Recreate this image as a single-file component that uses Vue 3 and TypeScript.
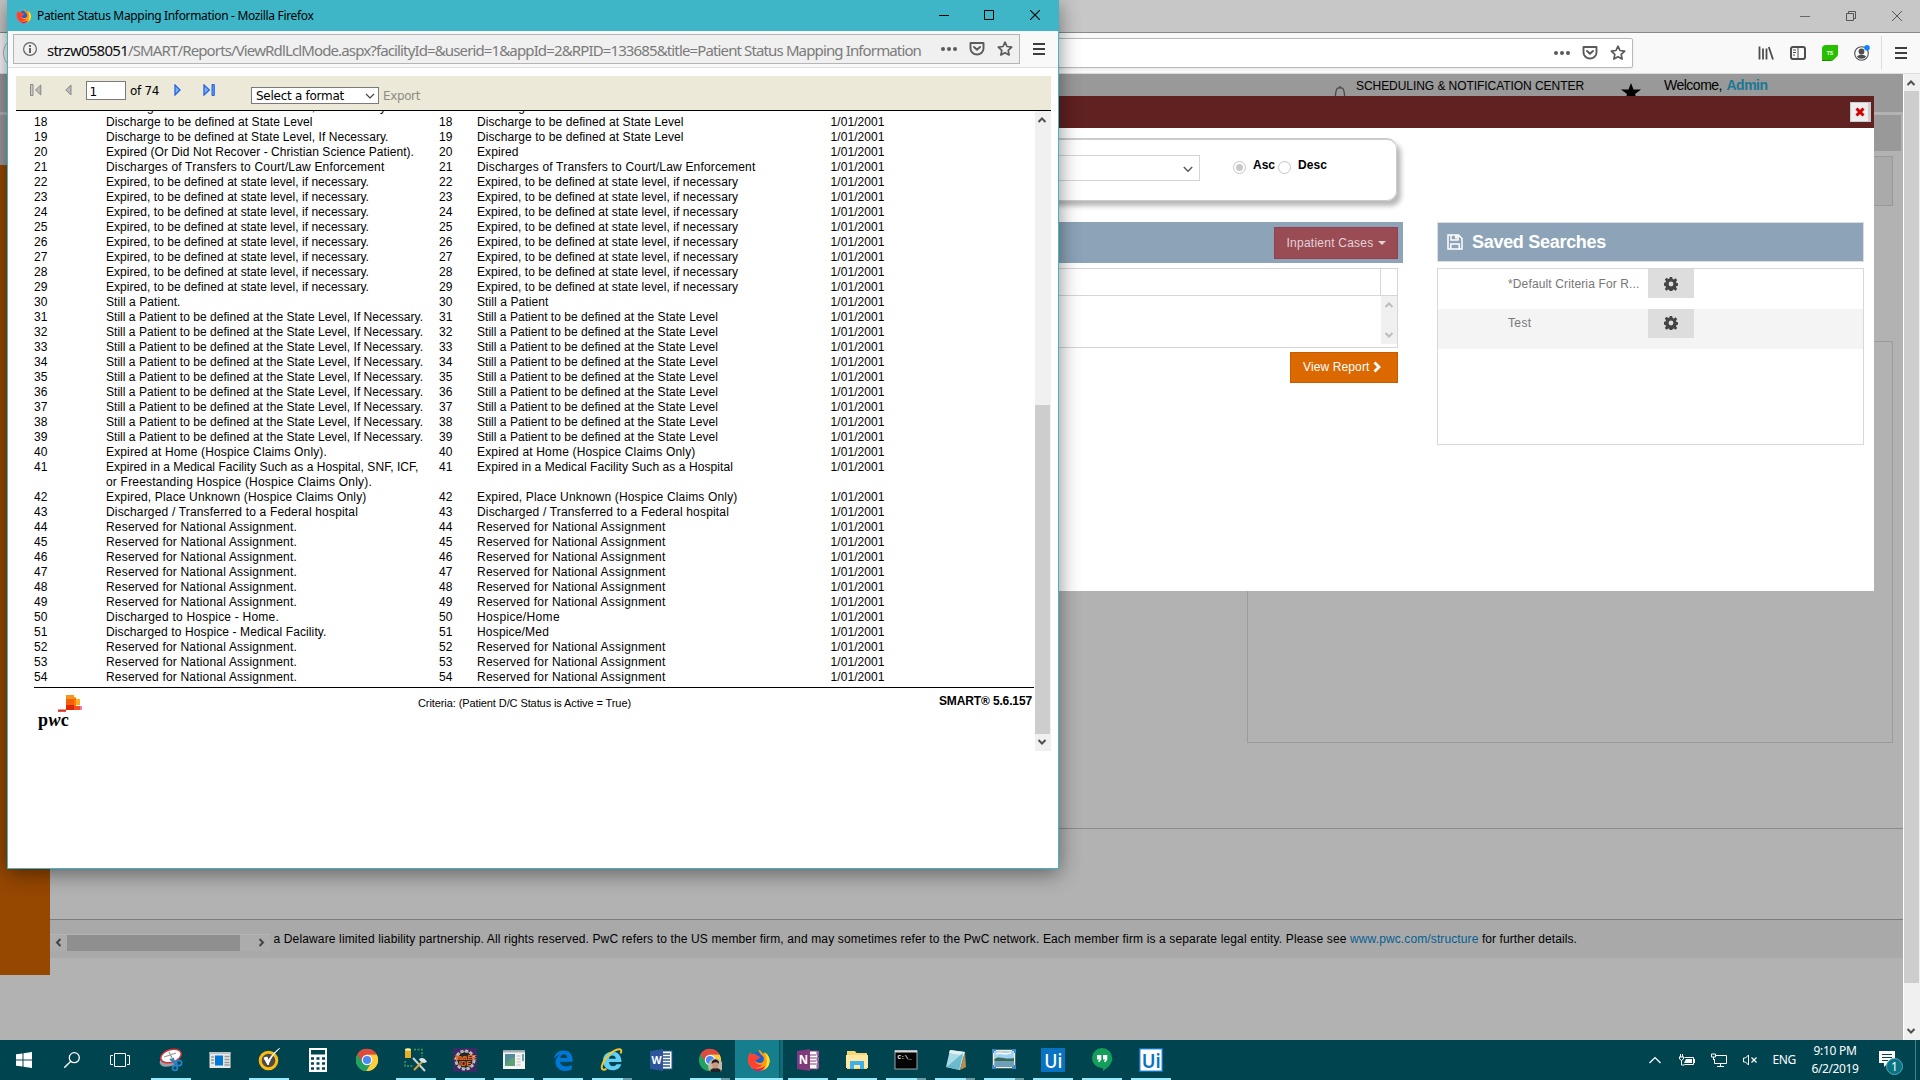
<script setup lang="ts">
interface Row {
  code: string
  left: [string, number][]
  right: [string, number]
}

interface Task {
  name: string
  open?: boolean
  stacked?: boolean
  active?: boolean
  svg: string
}

// Spreads a label's letters so that it fills the given width in pixels.
const vFit = {
  mounted(el: HTMLElement, binding: { value: number }) {
    const natural = el.getBoundingClientRect().width
    const count = (el.textContent ?? '').length
    el.style.letterSpacing = `${(binding.value - natural) / count}px`
  },
}

const dischargeNec: [string, number] = ['Discharge to be defined at State Level, If Necessary.', 282.5]
const discharge: [string, number] = ['Discharge to be defined at State Level', 206.5]
const reservedDot: [string, number] = ['Reserved for National Assignment.', 191]
const reserved: [string, number] = ['Reserved for National Assignment', 188.5]

const rows: Row[] = [
  { code: '17', left: [dischargeNec], right: discharge },
  { code: '18', left: [discharge], right: discharge },
  { code: '19', left: [dischargeNec], right: discharge },
  { code: '20', left: [['Expired (Or Did Not Recover - Christian Science Patient).', 308]], right: ['Expired', 41.5] },
  {
    code: '21',
    left: [['Discharges of Transfers to Court/Law Enforcement', 278.5]],
    right: ['Discharges of Transfers to Court/Law Enforcement', 278.5],
  },
]
for (let n = 22; n <= 29; n++) {
  rows.push({
    code: String(n),
    left: [['Expired, to be defined at state level, if necessary.', 263]],
    right: ['Expired, to be defined at state level, if necessary', 261],
  })
}
rows.push({ code: '30', left: [['Still a Patient.', 74.5]], right: ['Still a Patient', 71.5] })
for (let n = 31; n <= 39; n++) {
  rows.push({
    code: String(n),
    left: [['Still a Patient to be defined at the State Level, If Necessary.', 317]],
    right: ['Still a Patient to be defined at the State Level', 241],
  })
}
rows.push(
  {
    code: '40',
    left: [['Expired at Home (Hospice Claims Only).', 221]],
    right: ['Expired at Home (Hospice Claims Only)', 218.5],
  },
  {
    code: '41',
    left: [
      ['Expired in a Medical Facility Such as a Hospital, SNF, ICF,', 312.5],
      ['or Freestanding Hospice (Hospice Claims Only).', 266],
    ],
    right: ['Expired in a Medical Facility Such as a Hospital', 256],
  },
  {
    code: '42',
    left: [['Expired, Place Unknown (Hospice Claims Only)', 260.5]],
    right: ['Expired, Place Unknown (Hospice Claims Only)', 260.5],
  },
  {
    code: '43',
    left: [['Discharged / Transferred to a Federal hospital', 252]],
    right: ['Discharged / Transferred to a Federal hospital', 252],
  },
)
for (let n = 44; n <= 49; n++) rows.push({ code: String(n), left: [reservedDot], right: reserved })
rows.push(
  { code: '50', left: [['Discharged to Hospice - Home.', 173]], right: ['Hospice/Home', 83] },
  { code: '51', left: [['Discharged to Hospice - Medical Facility.', 220.5]], right: ['Hospice/Med', 72] },
)
for (let n = 52; n <= 54; n++) rows.push({ code: String(n), left: [reservedDot], right: reserved })

const gear = 'M5.8 0h2.4l.4 2 1.2.5L11.500 1.300l1.700 1.700-1.200 1.700.5 1.200 2 .4v2.400l-2 .4-.5 1.200 1.200 1.700-1.700 1.700-1.700-1.200-1.200.5-.4 2H5.800l-.4-2-1.200-.5-1.700 1.200-1.700-1.700 1.200-1.700-.5-1.200-2-.4V5.800l2-.4.5-1.200L.800 2.500 2.500.800l1.700 1.200 1.200-.5zM7 4.600a2.400 2.400 0 1 0 0 4.800 2.400 2.400 0 0 0 0-4.800z'

const chromeShape = (r: number) => `
  <circle cx="12" cy="12" r="${r}" fill="#fc3"/>
  <path d="M12 12L2.300 6.600A11 11 0 0 1 21.600 6.600H12z" fill="#dd4b3e"/>
  <path d="M12 12L2.300 6.600A11 11 0 0 0 11.500 23L16.600 14.600z" fill="#1ea362"/>
  <path d="M12 6.600H21.600A11 11 0 0 1 11.300 23L16.800 14.500z" fill="#fdcd3f"/>
  <path d="M2.400 6.400A11 11 0 0 1 21.600 6.600H12L7.400 14.200z" fill="#dd4b3e"/>
  <circle cx="12" cy="12" r="5.200" fill="#fff"/><circle cx="12" cy="12" r="4.100" fill="#4a8af4"/>`

const foxShape = `
  <circle cx="12" cy="12.500" r="8.500" fill="#1f5fc9"/>
  <path d="M11.500 1.500C14 3 15 4 15.500 5.500L18 4.500C20.500 6.500 23 10 22.600 14A10.800 10.800 0 0 1 1.300 13.500C1 10 2 6.500 3.600 4.200L4.500 7C6 6 8 6 9.500 7.600L13 9.300 10.500 11 7.700 12.300C9 14.500 12 16 15 14.500 17.500 13 17.500 9.500 15.500 7.800 13 6 12 4 11.500 1.500z" fill="#ff9a16"/>
  <path d="M3.600 4.200L4.500 7C6 6 8 6 9.500 7.600L13 9.300 10.500 11 7.700 12.300C8.200 15.500 12 17.500 15.500 16.500 13 20 8 21 4 19A10.800 10.800 0 0 1 3.600 4.200z" fill="#ff3f31"/>
  <path d="M18 4.500C21.500 7 23.200 10.500 22.600 14A10.800 10.800 0 0 1 17 22.100C20 18 21 12 18 4.500z" fill="#ffe329"/>
  <path d="M4.500 19.300A10.800 10.800 0 0 0 12 23.300C15 22 17 20.500 18 18 14 21 9 21.500 4.500 19.300z" fill="#e6165c"/>`

const tasks: Task[] = [
  {
    name: 'snip', open: true,
    svg: `<ellipse cx="10" cy="13" rx="9.500" ry="5.500" fill="#9aa0a3" transform="rotate(-14 10 13)"/>
      <ellipse cx="12" cy="8" rx="10.500" ry="6.300" fill="#fff" stroke="#d2343b" stroke-width="1.500" transform="rotate(-18 12 8)"/>
      <path d="M5 9l12-4M10 4l5 10" stroke="#999" stroke-width="1.200"/>
      <g fill="none" stroke="#2583c6" stroke-width="1.800"><circle cx="20" cy="15" r="2.600"/><circle cx="16" cy="20" r="2.400"/><path d="M11 11l7 5M14 10l2 8"/></g>`,
  },
  {
    name: 'news',
    svg: `<rect x="1.500" y="4" width="21" height="16" fill="#e8e8e8"/><path d="M1.500 4h21v2h-21z" fill="#bcc3c6"/><rect x="7" y="7.500" width="8" height="10" fill="#0078d7"/><path d="M3 9h3M3 12h3M3 15h3M16.500 8.500h5M16.500 11.500h5M16.500 14.500h5M16.500 17h5" stroke="#999" stroke-width="1.300"/>`,
  },
  {
    name: 'norton', open: true,
    svg: `<circle cx="11.500" cy="12.500" r="8.300" fill="#4c4c45" stroke="#fdbb12" stroke-width="3"/><path d="M7 10l4 7C14 9 18 4 22.500.5 17 5 14 8 11.500 12.500L10 9z" fill="#fff" stroke="#fff"/>`,
  },
  {
    name: 'calculator',
    svg: `<rect x="3" width="18" height="24" fill="#fff"/><path d="M5 2h14v4.500H5z" fill="#004450"/><g stroke="#004450" stroke-width="2.500" stroke-dasharray="3 2.500"><path d="M5 10.500h14M5 15.500h14M5 20.500h14"/></g>`,
  },
  { name: 'chrome', svg: chromeShape(11) },
  {
    name: 'sql-tools', open: true,
    svg: `<path d="M1 1h6v9H1z" fill="#e5b227"/><ellipse cx="4" cy="1.500" rx="3" ry="1.300" fill="#fff0a8"/><path d="M10 1.500h8v7M1 13v5h8" fill="none" stroke="#3aa657" stroke-width="1.400" stroke-dasharray="2 1.500"/><path d="M9 10l12 13" stroke="#c9d2d8" stroke-width="2"/><path d="M20 12L10 22" stroke="#d8a640" stroke-width="2"/><path d="M15 11c3-2 6-1 8 3l-3 1-4-2z" fill="#dce5ea"/>`,
  },
  {
    name: 'java-ee', open: true,
    svg: `<rect width="24" height="24" fill="#3b2a63"/><circle cx="12" cy="12" r="9" fill="#292526" stroke="#c5bfc4" stroke-width="3" stroke-dasharray="3 1.700"/><circle cx="12" cy="12" r="8.500" fill="none" stroke="#aaa"/><text x="12" y="11.500" text-anchor="middle" font-family="Liberation Sans" font-size="7.500" font-weight="700" fill="#ee6f21" textLength="23">Java EE</text><text x="12" y="18" text-anchor="middle" font-family="Liberation Sans" font-size="7.500" font-weight="700" fill="#ee6f21">IDE</text>`,
  },
  {
    name: 'app-window', open: true,
    svg: `<rect x="1" y="2.500" width="22" height="18.500" fill="#f4f4f4"/><path d="M1 2.500h22v2H1z" fill="#a8b2b5"/><rect x="3" y="6" width="10" height="12" fill="#52899b"/><path d="M3 18c2-6 6-8 10-9v9z" fill="#5ba078"/><path d="M14.500 8h4M14.500 11h4M14.500 14h4M14.500 17h4" stroke="#bbb"/><path d="M21 6v7" stroke="#45899b" stroke-width="1.500"/>`,
  },
  {
    name: 'edge', open: true,
    svg: `<path transform="translate(1.200 1) scale(.93)" d="M2 11C2.500 4.500 7 1.500 12 1.500c6.500 0 10 4.500 10 10.500v1.800H8.500c.2 4.200 4.500 5 7 5 2.200 0 4-.7 5.500-1.600v4.600c-2 1.100-4.400 1.700-7 1.700C7.500 23.500 3.500 19.500 3.500 14c0-3.500 2-6.200 5-7.700C5.500 6.600 3.300 8.500 2 11zm6.600-1.200h7.600c0-2.600-1.300-4.200-3.600-4.200s-3.600 1.800-4 4.200z" fill="#0078d7"/>`,
  },
  {
    name: 'ie', open: true, stacked: true,
    svg: `<path d="M3 12.500C3 7 7 3.500 12.500 3.500S21.500 8 21.500 14H9c.2 3 2 4.300 4 4.300 1.700 0 3-.8 3.500-2h4.800c-1 3.800-4.300 6-8.500 6C6.800 22.300 3 18.300 3 12.500zm6-1.800h6.800c-.2-2-1.600-3.200-3.300-3.200-1.800 0-3.200 1.100-3.500 3.200z" fill="#61cef3"/><path d="M20.500 5.500C22 2.800 21.500 1 19 1.300 12.500 2 4 10.500 2 17.500 1 21.300 2.800 22.800 6.500 20.800" fill="none" stroke="#f6c62d" stroke-width="1.900"/>`,
  },
  {
    name: 'word',
    svg: `<path d="M12 3h11v18H12z" fill="#fff" stroke="#2b579a"/><path d="M14 6h7M14 9h7M14 12h7M14 15h7M14 18h7" stroke="#2b579a" stroke-width="1.300"/><path d="M1 3l13-2v22L1 21z" fill="#2b579a"/><text x="7.500" y="16" text-anchor="middle" font-family="Noto Sans" font-size="10.500" font-weight="700" fill="#fff">W</text>`,
  },
  {
    name: 'chrome-profile', open: true, stacked: true,
    svg: `${chromeShape(10.5)}<circle cx="17.500" cy="18" r="7.500" fill="#c3b8a9"/><path d="M12 23c1-4 10-4 11 0a8 8 0 0 1-11 0z" fill="#222"/><ellipse cx="17.300" cy="16.500" rx="3" ry="4" fill="#c9977c"/><path d="M13.800 16c-1-6 8-6 7.200 0-1-2.500-5.500-2.500-7.200 0z" fill="#1d1a1a"/>`,
  },
  { name: 'firefox', active: true, open: true, svg: foxShape },
  {
    name: 'onenote', open: true,
    svg: `<path d="M12 3h10v18H12z" fill="#fff" stroke="#80397b"/><path d="M14 7h6M14 10h6M14 13h6M14 16h6" stroke="#80397b"/><path d="M20.500 3h2.500v4.500h-2.500zM20.500 9h2.500v4.500h-2.500zM20.500 15h2.500v5h-2.500z" fill="#a25ca0"/><path d="M1 3l13-2v22L1 21z" fill="#80397b"/><text x="7.500" y="16.300" text-anchor="middle" font-family="Noto Sans" font-size="11.500" font-weight="700" fill="#fff">N</text>`,
  },
  {
    name: 'explorer', open: true,
    svg: `<path d="M2 3h8l1.500 2H22v16H2z" fill="#f8d775"/><path d="M1 7h22v13H1z" fill="#ffe9a2"/><path d="M5 21v-8h14v8h-4v-4H9v4z" fill="#3fb1ea"/>`,
  },
  {
    name: 'cmd', open: true, stacked: true,
    svg: `<rect x="1" y="2.500" width="22" height="18.500" fill="#050505" stroke="#9aa3a5"/><path d="M1 2.500h22v2H1z" fill="#d6dadb"/><text x="3.500" y="11" font-family="Liberation Mono" font-size="6" font-weight="700" fill="#fff">C:\\_</text>`,
  },
  {
    name: 'notepad', open: true, stacked: true,
    svg: `<path d="M7 2l15 2-5 18-14-3z" fill="#a9dbe6"/><path d="M7 2l15 2-1 3.500L6 5z" fill="#e5eff1"/><path d="M6 17L20 5l-4 17-13-3z" fill="#6cb9cb"/><path d="M22 4l1 15-6 3z" fill="#bc8c4f"/>`,
  },
  {
    name: 'photos', open: true, stacked: true,
    svg: `<rect x="1.500" y="2.500" width="21" height="17" fill="#9fd2f2" stroke="#f3ead8" stroke-width="1.500"/><path d="M2.500 11c6-4 9 1 19.500-1v3H2.500z" fill="#3c6b55"/><path d="M2.500 13H22v6H2.500z" fill="#6e9fb8"/><path d="M4 6c4-2 8 1 15-1" stroke="#fff" stroke-width="1.500" fill="none"/><path d="M1 5V2h3M20 2h3v3M1 17v3h3M20 20h3v-3" stroke="#3c84cc" stroke-width="2" fill="none"/>`,
  },
  {
    name: 'uipath-studio', open: true,
    svg: `<rect width="24" height="24" fill="#0a72c2"/><text x="12.300" y="19.500" text-anchor="middle" font-family="Noto Sans" font-size="20" font-weight="500" fill="#fff" textLength="18" lengthAdjust="spacingAndGlyphs">Ui</text>`,
  },
  {
    name: 'hangouts', open: true,
    svg: `<path d="M12 0a10.300 10.300 0 0 1 10.300 10.300c0 6-5 9.700-9.300 12.700v-3h-1A10 10 0 0 1 12 0z" fill="#149e5b"/><path d="M7 7h4.300v4.500L9.500 14H8l1-2.500H7zM13 7h4.300v4.500L15.500 14H14l1-2.500h-2z" fill="#fff"/>`,
  },
  {
    name: 'uipath-robot', open: true,
    svg: `<rect x=".7" y=".7" width="22.600" height="22.600" fill="#fff" stroke="#0a72c2" stroke-width="1.400"/><text x="12.300" y="19.500" text-anchor="middle" font-family="Noto Sans" font-size="20" font-weight="600" fill="#0a72c2" textLength="19" lengthAdjust="spacingAndGlyphs">Ui</text>`,
  },
]

const pocket = '<path d="M1.500 2h13v5.500a6.500 6 0 0 1-13 0z" fill="none" stroke="#5a5a5c" stroke-width="1.900" stroke-linejoin="round"/><path d="M5 6l3 2.800L11 6" fill="none" stroke="#5a5a5c" stroke-width="1.900" stroke-linecap="round"/>'
const star = '<path d="M8 1.200l2 4.300 4.700.6-3.500 3.200.9 4.700L8 11.700 3.900 14l.9-4.700L1.300 6.100 6 5.500z" fill="none" stroke="#5a5a5c" stroke-width="1.700" stroke-linejoin="round"/>'
const dots = '<g fill="#5a5a5c"><circle cx="2" cy="8" r="2"/><circle cx="8" cy="8" r="2"/><circle cx="14" cy="8" r="2"/></g>'
const burger = '<path d="M2 3h12M2 8h12M2 13h12" stroke="#3e3e40" stroke-width="2"/>'
const chevron = '<path d="M1.500 6L5 2.500 8.500 6" fill="none" stroke="currentColor" stroke-width="2"/>'
</script>

<template>
  <div class="desktop">
    <!-- Main browser -->
    <div class="browser">
      <div class="titlebar">
        <svg width="10" height="10"><path d="M0 5.500h10" stroke="#666" /></svg>
        <svg width="10" height="10"><path d="M.5 2.500h7v7h-7zM2.500 2.500v-2h7v7h-2" fill="none" stroke="#555" /></svg>
        <svg width="10" height="10"><path d="M0 0l10 10M10 0L0 10" stroke="#555" /></svg>
      </div>
      <div class="navbar">
        <span class="back"></span>
        <div class="address">
          <svg width="16" height="16" v-html="dots"></svg>
          <svg width="16" height="16" v-html="pocket"></svg>
          <svg width="16" height="16" v-html="star"></svg>
        </div>
        <div class="tools">
          <svg width="16" height="16"><path d="M1.500 1.500v13M5 3.500v11M8.500 3.500v11M10.800 2l4.200 12.500" stroke="#4d4d50" stroke-width="1.800" /></svg>
          <svg width="16" height="16"><rect x="1" y="2" width="14" height="12" rx="2" fill="none" stroke="#4d4d50" stroke-width="2" /><path d="M8 2v12M3 5h3M3 7.500h3M3 10h2" stroke="#4d4d50" /></svg>
          <svg width="16" height="16"><path d="M4 0h12v9q0 1.500-1 2.500l-3.500 3.500q-1 1-2.500 1H0V4q0-4 4-4z" fill="#27bf00" /><path d="M0 15.500h9" stroke="#168a00" /><text x="8" y="10" text-anchor="middle" font-family="Liberation Sans" font-size="5" font-weight="700" fill="#fff">TS</text></svg>
          <svg width="16" height="16"><circle cx="7.500" cy="8.500" r="6.800" fill="none" stroke="#4d4d50" stroke-width="1.100" /><circle cx="7.500" cy="6.500" r="2.900" fill="#4d4d50" /><path d="M3 11.500c2-2.500 7-2.500 9 0-1.500 3-7.500 3-9 0z" fill="#4d4d50" /><circle cx="13" cy="2.800" r="2.800" fill="#0a84ff" /></svg>
          <i class="divider"></i>
          <svg width="16" height="16" v-html="burger"></svg>
        </div>
      </div>

      <div class="viewport">
        <div class="page">
          <div class="page-head">
            <svg class="bell" width="12" height="14"><path d="M.800 14C2 11 1 4.500 3.800 3.200 5 2.700 7 2.700 8.200 3.200 11 4.500 10 11 11.200 14M6 2.800V1" fill="none" stroke="#4a4a4a" stroke-width="1.300" /></svg>
            <span v-fit="228" class="sched">SCHEDULING &amp; NOTIFICATION CENTER</span>
            <svg class="fav" width="20" height="18"><path d="M10 0l2.500 6.500H20l-6 4.500 2.500 7L10 14l-6.500 4L6 11 0 6.500h7.500z" /></svg>
            <span v-fit="58" class="welcome">Welcome,</span>
            <b v-fit="41" class="admin">Admin</b>
          </div>
          <div class="page-body">
            <div class="rail"><div class="rail-top"></div><div class="rail-main"></div></div>
            <div class="page-main">
              <div class="band"></div>
              <div class="box-a"></div>
              <div class="box-b"></div>
              <div class="rule"></div>
              <div class="footer">
                <div class="hscroll">
                  <svg class="west" width="10" height="7" v-html="chevron"></svg>
                  <i></i>
                  <svg class="east" width="10" height="7" v-html="chevron"></svg>
                </div>
                <p>
                  <span v-fit="1076.500">a Delaware limited liability partnership. All rights reserved. PwC refers to the US member firm, and may sometimes refer to the PwC network. Each member firm is a separate legal entity. Please see&nbsp;</span><a v-fit="128.500">www.pwc.com/structure</a><span v-fit="98.5">&nbsp;for further details.</span>
                </p>
              </div>
            </div>
          </div>
        </div>
        <div class="vscroll">
          <div class="cap"><svg width="10" height="7" v-html="chevron"></svg></div>
          <i></i>
          <div class="cap end"><svg class="south" width="10" height="7" v-html="chevron"></svg></div>
        </div>
      </div>
    </div>

    <!-- Search dialog -->
    <div class="modal">
      <div class="modal-head">
        <span class="close"><svg width="10" height="10"><path d="M1.500 1.500l7 7M8.500 1.500l-7 7" stroke="#d40000" stroke-width="3" /></svg></span>
      </div>
      <div class="modal-body">
        <div class="left">
          <div class="sort">
            <div class="select"><svg width="10" height="7" class="south" viewBox="0 0 10 7"><path d="M.8 6L5 1.800 9.200 6" fill="none" stroke="#555" stroke-width="1.400" /></svg></div>
            <i class="radio on"></i><b v-fit="22">Asc</b>
            <i class="radio"></i><b v-fit="29" class="desc">Desc</b>
          </div>
          <div class="bluebar">
            <div class="cases"><span v-fit="87">Inpatient Cases</span><i></i></div>
          </div>
          <div class="grid">
            <div class="grid-head"></div>
            <div class="grid-body">
              <div class="mini">
                <svg width="10" height="7" v-html="chevron"></svg>
                <svg class="south" width="10" height="7" v-html="chevron"></svg>
              </div>
            </div>
          </div>
          <div class="view">
            <span v-fit="66.500">View Report</span>
            <svg width="8" height="12"><path d="M1.500 1.500L6 6l-4.500 4.500" fill="none" stroke="#fff" stroke-width="2.800" /></svg>
          </div>
        </div>
        <div class="saved">
          <div class="saved-head">
            <svg width="16" height="16"><path d="M1 1h10.500L15 4.500V15H1zM4 1v5h7V1M3.800 15v-5h8.400v5" fill="none" stroke="#fff" stroke-width="1.500" /><path d="M8 1.500h2v3H8z" fill="#fff" /></svg>
            <b v-fit="134">Saved Searches</b>
          </div>
          <div class="saved-list">
            <div class="saved-row"><span><em v-fit="131.500">*Default Criteria For R...</em></span><div class="gear"><svg width="14" height="14"><path :d="gear" fill="#444" fill-rule="evenodd" /></svg></div></div>
            <div class="saved-row alt"><span><em v-fit="23.500">Test</em></span><div class="gear"><svg width="14" height="14"><path :d="gear" fill="#444" fill-rule="evenodd" /></svg></div></div>
          </div>
        </div>
      </div>
    </div>

    <!-- Report window -->
    <div class="popup">
      <div class="popup-title">
        <svg width="16" height="16" viewBox="0 0 24 24" v-html="foxShape"></svg>
        <span v-fit="276.500">Patient Status Mapping Information - Mozilla Firefox</span>
        <div class="controls">
          <svg width="10" height="10"><path d="M0 5.500h10" stroke="#000" /></svg>
          <svg width="10" height="10"><path d="M.5.500h9v9h-9z" fill="none" stroke="#000" /></svg>
          <svg width="10" height="10"><path d="M0 0l10 10M10 0L0 10" stroke="#000" stroke-width="1.100" /></svg>
        </div>
      </div>
      <div class="popup-nav">
        <div class="popup-url">
          <svg width="14" height="14"><circle cx="7" cy="7" r="6.400" fill="none" stroke="#666" stroke-width="1.200" /><path d="M7 6v5M7 3v2" stroke="#555" stroke-width="1.800" /></svg>
          <p><span v-fit="81" class="host">strzw058051</span><span v-fit="793">/SMART/Reports/ViewRdlLclMode.aspx?facilityId=&amp;userid=1&amp;appId=2&amp;RPID=133685&amp;title=Patient Status Mapping Information</span></p>
          <svg width="16" height="16" v-html="dots"></svg>
          <svg width="16" height="16" v-html="pocket"></svg>
          <svg width="16" height="16" v-html="star"></svg>
        </div>
        <svg width="16" height="16" v-html="burger"></svg>
      </div>
      <div class="report">
        <div class="report-tools">
          <svg class="first" width="12" height="12"><path d="M.5.500h2.500v11H.5z" fill="#ccc" stroke="#888" /><path d="M10.800 1v10L5.500 6z" fill="#bbb" stroke="#888" /></svg>
          <svg class="prev" width="7" height="12"><path d="M6 1v10L.8 6z" fill="#bbb" stroke="#888" /></svg>
          <div class="pageno">1</div>
          <span v-fit="29" class="of">of 74</span>
          <svg class="next" width="7" height="12"><path d="M1 1v10l5-5z" fill="#7db1ff" stroke="#2463dd" stroke-width="1.300" /></svg>
          <svg class="last" width="12" height="12"><path d="M1 1v10l5.300-5z" fill="#7db1ff" stroke="#2463dd" stroke-width="1.300" /><path d="M9 .5h2.300v11H9z" fill="#5b97ff" stroke="#2463dd" /></svg>
          <div class="format"><span v-fit="88">Select a format</span><svg class="south" width="10" height="7"><path d="M1 6L5 2l4 4" fill="none" stroke="#444" stroke-width="1.200" /></svg></div>
          <span v-fit="37" class="export">Export</span>
        </div>
        <div class="report-view">
          <div class="sheet">
            <div class="rows">
              <div v-for="row in rows" :key="row.code" class="row">
                <span class="c1">{{ row.code }}</span>
                <span class="c2"><span v-for="line in row.left" :key="line[0]" class="line"><em v-fit="line[1]">{{ line[0] }}</em></span></span>
                <span class="c3">{{ row.code }}</span>
                <span class="c4"><em v-fit="row.right[1]">{{ row.right[0] }}</em></span>
                <span class="c5"><em v-fit="54">1/01/2001</em></span>
              </div>
            </div>
            <div class="sheet-foot">
              <div class="logo">
                <svg width="24" height="18">
                  <path d="M0 14.500h8v2.300H0z" fill="#d93023" /><path d="M8 0h8v4H8z" fill="#f7931e" /><path d="M8 4h8v6H8z" fill="#f75f0a" /><path d="M8 10h8v5H8z" fill="#dd2a00" /><path d="M16 2h2v2h4v6h-6z" fill="#ffb01f" /><path d="M16 3h2v8h-2z" fill="#fb7d00" /><path d="M16 11h6v4h-6z" fill="#f94b22" /><path d="M22 11h2v4h-2z" fill="#ee7fae" />
                </svg>
                <b>p<i>w</i>c</b>
              </div>
              <span v-fit="213" class="criteria">Criteria: (Patient D/C Status is Active = True)</span>
              <b v-fit="93" class="version">SMART® 5.6.157</b>
            </div>
          </div>
          <div class="rscroll">
            <div class="cap"><svg width="10" height="7" v-html="chevron"></svg></div>
            <i></i>
            <div class="cap"><svg class="south" width="10" height="7" v-html="chevron"></svg></div>
          </div>
        </div>
      </div>
    </div>

    <!-- Taskbar -->
    <div class="taskbar">
      <div class="sys"><svg width="16" height="16"><path d="M0 2.300L6.500 1.400V7.500H0zM7.500 1.200L16 0v7.500H7.500zM0 8.500h6.500v6.100L0 13.700zM7.500 8.500H16V16l-8.500-1.200z" fill="#fff" /></svg></div>
      <div class="sys"><svg width="16" height="16"><circle cx="10.300" cy="5.700" r="5" fill="none" stroke="#fff" stroke-width="1.300" /><path d="M6.800 9.200L.3 15.700" stroke="#fff" stroke-width="1.400" /></svg></div>
      <div class="sys"><svg width="20" height="16"><path d="M4.500 1.500h11v13h-11zM3 3.500H.5v9H3M17 3.500h2.500v9H17" fill="none" stroke="#fff" /></svg></div>
      <div class="tasks">
        <div v-for="t in tasks" :key="t.name" class="task" :class="{ open: t.open, stacked: t.stacked, active: t.active }">
          <svg width="24" height="24" v-html="t.svg"></svg>
        </div>
      </div>
      <div class="tray">
        <svg class="up" width="12" height="8"><path d="M.5 7L6 1.500 11.500 7" fill="none" stroke="#fff" stroke-width="1.200" /></svg>
        <svg class="bat" width="16" height="12"><path d="M5.500 3.500h9v7h-9M15.500 5v4" fill="none" stroke="#fff" /><path d="M7 5h6v4H5z" fill="#fff" /><path d="M0 3h5M1.500 0v3M3.500 0v3M.5 3v2l2 1.500 2-1.500V3M2.500 6v5h3" fill="none" stroke="#fff" /></svg>
        <svg class="net" width="16" height="14"><path d="M5 2.500h10.500v8H3.500V6M9.500 10.500v3M6 13.500h7" fill="none" stroke="#fff" /><path d="M.5 1h4v3h-4zM2.500 4v3" fill="none" stroke="#fff" /></svg>
        <svg class="vol" width="15" height="12"><path d="M.5 4h2l3-3v10l-3-3h-2z" fill="none" stroke="#fff" /><path d="M8.500 3.500l5 5M13.500 3.500l-5 5" stroke="#fff" stroke-width="1.200" /></svg>
        <span v-fit="23.500" class="lang">ENG</span>
        <div class="clock"><span v-fit="43">9:10 PM</span><span v-fit="47">6/2/2019</span></div>
        <svg class="note" width="26" height="26"><path d="M0 1h16v12H9l-4 4v-4H0z" fill="#fff" /><path d="M3 4.500h10M3 7.500h10M3 10.500h6" stroke="#004450" /><circle cx="15.500" cy="16.500" r="8" fill="#087382" stroke="#5da6b0" /><text x="15.500" y="20.700" text-anchor="middle" font-family="Noto Sans" font-size="12" fill="#fff">1</text></svg>
        <i class="peek"></i>
      </div>
    </div>
  </div>
</template>

<style>
html,
body {
  margin: 0;
  overflow: hidden;
}
</style>

<style scoped>
* {
  box-sizing: border-box;
}
svg {
  display: block;
  flex: none;
}
em {
  font-style: normal;
  display: inline-block;
}
span {
  white-space: nowrap;
}
.south {
  transform: rotate(180deg);
}
.desktop {
  position: relative;
  width: 1920px;
  height: 1080px;
  overflow: hidden;
  display: flex;
  flex-direction: column;
  background: #b2b2b2;
  font: 12px/15px 'Liberation Sans', Arial, sans-serif;
  color: #000;
}
.browser {
  height: 1040px;
  display: flex;
  flex-direction: column;
}
.titlebar {
  height: 33px;
  background: #c7c7c7;
  border-bottom: 1px solid #888;
  display: flex;
  justify-content: flex-end;
  align-items: center;
  gap: 36px;
  padding-right: 18px;
}
.navbar {
  height: 41px;
  background: #f9f9fa;
  border-bottom: 1px solid #dcdcdc;
  display: flex;
  align-items: flex-start;
}
.back {
  width: 34px;
  height: 34px;
  margin: 3px 0 0 3px;
  border: 1px solid #b5b5b5;
  border-radius: 50%;
}
.address {
  width: 1496px;
  height: 30px;
  margin: 5px 0 0 100px;
  background: #fff;
  border: 1px solid #b8b8b8;
  border-radius: 2px;
  box-shadow: 0 1px 3px #0001;
  display: flex;
  justify-content: flex-end;
  align-items: center;
  gap: 12px;
  padding-right: 6px;
}
.tools {
  flex: 1;
  height: 40px;
  display: flex;
  align-items: center;
  gap: 16px;
  padding: 0 11px 0 125px;
}
.divider {
  width: 1px;
  height: 34px;
  background: #ddd;
  margin: 0 -5px;
}
.divider + svg {
  margin-left: auto;
}
.viewport {
  height: 966px;
  display: flex;
}
.page {
  width: 1903px;
  background: #b2b2b2;
}
.page-head {
  height: 38px;
  background: #999;
  display: flex;
  align-items: flex-start;
}
.bell {
  margin: 11px 0 0 1334px;
}
.sched {
  margin: 5px 0 0 10px;
}
.fav {
  margin: 9px 0 0 37px;
}
.welcome,
.admin {
  font-size: 14px;
  line-height: 16px;
}
.welcome {
  margin: 3px 0 0 23px;
}
.admin {
  margin: 3px 0 0 4.5px;
  color: #1b7794;
}
.page-body {
  display: flex;
  margin-top: 3px;
}
.rail {
  width: 50px;
}
.rail-top {
  height: 50px;
  background: #999;
}
.rail-main {
  height: 810px;
  background: #964700;
}
.page-main {
  flex: 1;
}
.band {
  height: 36px;
  margin-right: 2px;
  background: #999;
}
.box-a {
  height: 50px;
  margin: 5px 10px 0 0;
  background: #aaa;
  border: 1px solid #999;
}
.box-b {
  height: 402px;
  margin: 135px 10px 0 1197px;
  border: 1px solid #9b9b9b;
}
.rule {
  height: 1px;
  margin-top: 85px;
  background: #8a8a8a;
}
.footer {
  height: 39px;
  margin-top: 90px;
  background: #a9a9a9;
  border-top: 1px solid #7c7c7c;
  display: flex;
  align-items: flex-start;
}
.hscroll {
  width: 220px;
  height: 17px;
  margin-top: 14px;
  border-top: 1px solid #b4b4b4;
  background: #acacac;
  display: flex;
  align-items: center;
  color: #444;
}
.hscroll i {
  width: 173px;
  height: 16px;
  margin: 0 auto 0 4px;
  background: #8f8f8f;
}
.west {
  margin: -1px 0 0 3px;
  transform: rotate(-90deg);
}
.east {
  margin: -1px 3px 0 0;
  transform: rotate(90deg);
}
.footer p {
  margin: 12px 0 0 3.5px;
  display: flex;
}
.footer a {
  color: #055f92;
  white-space: nowrap;
}
.vscroll {
  width: 17px;
  border-left: 1px solid #fff;
  background: #f0f0f0;
  color: #505050;
}
.vscroll i {
  display: block;
  width: 15px;
  height: 892px;
  background: #cdcdcd;
}
.cap {
  height: 17px;
  display: flex;
  align-items: center;
  justify-content: center;
  padding-right: 2px;
}
.cap.end {
  margin-top: 40px;
}

/* Search dialog */
.modal {
  position: absolute;
  left: 400px;
  top: 96px;
  width: 1474px;
  height: 495px;
  background: #fff;
}
.modal-head {
  height: 32px;
  background: #602121;
  display: flex;
  justify-content: flex-end;
  padding: 6px 3px 0 0;
}
.close {
  width: 21px;
  height: 20px;
  background: #eee;
  border: 1px solid #ccc;
  border-right-width: 3px;
  display: flex;
  align-items: center;
  justify-content: center;
}
.modal-body {
  display: flex;
  align-items: flex-start;
}
.left {
  width: 1003px;
  display: flex;
  flex-direction: column;
}
.sort {
  height: 63px;
  margin: 10px 6px 0 0;
  border: 2px solid #ccc;
  border-bottom-width: 1px;
  border-right-width: 1px;
  border-radius: 10px;
  box-shadow: 4px 5px 5px #b8b8b8;
  display: flex;
  align-items: flex-start;
}
.select {
  width: 798px;
  height: 26px;
  margin: 15px 0 0 0;
  border: 1px solid #d5d5d5;
  display: flex;
  align-items: center;
  justify-content: flex-end;
  padding: 2px 6px 0 0;
}
.radio {
  width: 13px;
  height: 13px;
  margin: 21px 7px 0 33px;
  border: 1px solid #c4c4c4;
  border-radius: 50%;
  padding: 2px;
}
.radio.on::before {
  content: '';
  display: block;
  width: 7px;
  height: 7px;
  border-radius: 50%;
  background: #c8c8c8;
}
.radio + b {
  margin-top: 18px;
}
b + .radio {
  margin-left: 3px;
}
.bluebar {
  height: 41px;
  margin-top: 21px;
  padding: 5px 5px 0 0;
  background: #8ca3b8;
  display: flex;
  justify-content: flex-end;
}
.cases {
  width: 124px;
  height: 32px;
  background: #9a4c55;
  border: 1px solid #94414b;
  color: #e1d3d8;
  display: flex;
  align-items: center;
  padding-left: 11.5px;
  gap: 4px;
}
.cases i {
  border: 4px solid transparent;
  border-top-color: #e1d3d8;
  border-bottom: 0;
}
.grid {
  height: 80px;
  margin: 5px 5px 0 0;
  border: 1px solid #d6d6d6;
}
.grid-head {
  height: 27px;
  border-bottom: 1px solid #d6d6d6;
  background: linear-gradient(90deg, transparent 979px, #d6d6d6 979px, #d6d6d6 980px, transparent 980px);
}
.grid-body {
  display: flex;
  justify-content: flex-end;
}
.mini {
  width: 16px;
  height: 48px;
  background: #f0f0f0;
  color: #bdbdbd;
  display: flex;
  flex-direction: column;
  align-items: center;
  justify-content: space-between;
  padding: 5px 1px 5px 0;
}
.view {
  width: 108px;
  height: 31px;
  margin: 4px 5px 0 auto;
  background: #dc6900;
  border: 1px solid #c75d00;
  color: #fff;
  display: flex;
  align-items: center;
  padding: 0 0 1px 12px;
  gap: 3px;
}
.view span {
  padding-top: 1px;
}
.saved {
  width: 427px;
  margin: 94px 0 0 34px;
}
.saved-head {
  height: 40px;
  background: #8ca3b8;
  border: 1px solid #dbdfe3;
  display: flex;
  align-items: center;
  gap: 9px;
  padding-left: 9px;
  color: #fff;
  font-size: 18px;
}
.saved-list {
  height: 177px;
  margin-top: 6px;
  border: 1px solid #d8d8d8;
}
.saved-row {
  height: 40px;
  display: flex;
  color: #777;
}
.saved-row.alt {
  background: #f4f4f4;
}
.saved-row > span {
  width: 210px;
  padding: 8px 0 0 70px;
}
.saved-row.alt > span {
  padding-top: 7px;
}
.gear {
  width: 46px;
  height: 29px;
  background: #ddd;
  display: flex;
  align-items: center;
  justify-content: center;
}
.alt .gear {
  padding-bottom: 2px;
}

/* Report window */
.popup {
  position: absolute;
  left: 7px;
  top: 0;
  width: 1052px;
  height: 869px;
  background: #fff;
  border: 1px solid #3eb6c8;
  border-top: 0;
  box-shadow: 0 4px 20px #0007;
}
.popup-title {
  height: 31px;
  background: #3eb6c8;
  display: flex;
  align-items: center;
  padding-left: 8px;
  font: 12px/16px 'Noto Sans', sans-serif;
}
.popup-title > span {
  margin-left: 5px;
}
.controls {
  display: flex;
  gap: 35px;
  margin: -1px 18px 0 auto;
}
.controls svg:last-child {
  margin-left: 1px;
}
.popup-nav {
  height: 37px;
  background: #f9f9fa;
  border-bottom: 1px solid #e0e0e0;
  display: flex;
  align-items: flex-start;
  padding-left: 5px;
}
.popup-url {
  width: 1007px;
  height: 30px;
  margin-top: 3px;
  background: #f0f0f0;
  border: 1px solid #b5b5b5;
  display: flex;
  align-items: center;
  padding: 0 6px 0 9px;
  gap: 12px;
  font: 15px/20px 'Noto Sans', sans-serif;
  color: #7b7b7b;
}
.popup-url p {
  display: flex;
  margin: 2px auto 0 -2px;
}
.host {
  color: #0c0c0d;
}
.popup-nav > svg {
  margin: 10px 0 0 11px;
}
.report {
  margin: 8px 7px 0 8px;
}
.report-tools {
  height: 34px;
  background: #ece9d8;
  display: flex;
  align-items: flex-start;
  font: 12px/15px 'DejaVu Sans', sans-serif;
}
.first {
  margin: 8px 0 0 13.5px;
}
.prev {
  margin: 8px 0 0 23px;
}
.pageno {
  width: 40px;
  height: 19px;
  margin: 5px 0 0 14px;
  border: 1px solid #7a7a7a;
  background: #fff;
  padding: 3px 3px 0;
}
.of {
  margin: 8px 0 0 4.5px;
}
.next {
  margin: 8px 0 0 14.5px;
}
.last {
  margin: 8px 0 0 22px;
}
.format {
  width: 128px;
  height: 17px;
  margin: 11px 0 0 36.5px;
  border: 1px solid #7a7a7a;
  background: #fff;
  display: flex;
  align-items: center;
  justify-content: space-between;
  padding: 2px 3px 0 4px;
}
.export {
  margin: 13px 0 0 4px;
  color: #8e8c82;
}
.report-view {
  height: 641px;
  border-top: 1px solid #000;
  display: flex;
}
.sheet {
  width: 1019px;
  padding-left: 18px;
}
.rows {
  height: 576px;
  overflow: hidden;
}
.row {
  display: flex;
  min-height: 15px;
}
.row:first-child {
  margin-top: -11px;
}
.row:first-child .c1,
.row:first-child .c3,
.row:first-child .c5 {
  visibility: hidden;
}
.row > span {
  flex: none;
}
.c1 {
  width: 72px;
}
.c2 {
  width: 333px;
}
.line {
  display: block;
  height: 15px;
}
.c3 {
  width: 38px;
}
.c4 {
  width: 353.5px;
}
.sheet-foot {
  width: 1000px;
  border-top: 1px solid #000;
  display: flex;
  align-items: flex-start;
}
.logo {
  width: 384px;
  padding: 7px 0 0 24px;
}
.logo b {
  display: block;
  margin: -2px 0 0 -20px;
  font: bold 18px/18px 'Liberation Serif', serif;
  letter-spacing: 0.4px;
}
.criteria {
  margin-top: 8px;
  font-size: 11px;
}
.version {
  margin: 6px 2px 0 auto;
  white-space: nowrap;
}
.rscroll {
  width: 16px;
  background: #f0f0f0;
  color: #505050;
}
.rscroll i {
  display: block;
  width: 15px;
  height: 329px;
  margin-top: 277px;
  background: #cdcdcd;
}

/* Taskbar */
.taskbar {
  height: 40px;
  background: #004450;
  display: flex;
}
.sys {
  width: 48px;
  display: flex;
  align-items: center;
  justify-content: center;
}
.tasks {
  display: flex;
  margin-left: 3px;
}
.task {
  position: relative;
  width: 49px;
  padding: 8px 0 0 12px;
}
.task.open::after {
  content: '';
  position: absolute;
  left: 4px;
  bottom: 0;
  width: 40px;
  height: 2px;
  background: #99ebfb;
}
.task.stacked::after {
  background: linear-gradient(90deg, #99ebfb 31px, #6a9ca8 31px);
}
.task.active {
  background: linear-gradient(90deg, #167f8e 44px, #06515e 44px, #06515e 45px, #126a78 45px, #126a78 48px, #004450 48px);
}
.task.active::after {
  left: 0;
  width: 48px;
}
.tray {
  flex: 1;
  display: flex;
  align-items: center;
  justify-content: flex-end;
  color: #fff;
  font: 12px/18px 'Noto Sans', sans-serif;
}
.bat {
  margin-left: 18px;
}
.net {
  margin-left: 16px;
}
.vol {
  margin-left: 16px;
}
.lang {
  margin-left: 15px;
}
.clock {
  width: 60px;
  margin-left: 9px;
  display: flex;
  flex-direction: column;
  align-items: center;
}
.note {
  margin: 6px 0 0 14px;
}
.peek {
  width: 1px;
  height: 40px;
  margin: 0 4px 0 10px;
  background: #4c7f88;
}
</style>
